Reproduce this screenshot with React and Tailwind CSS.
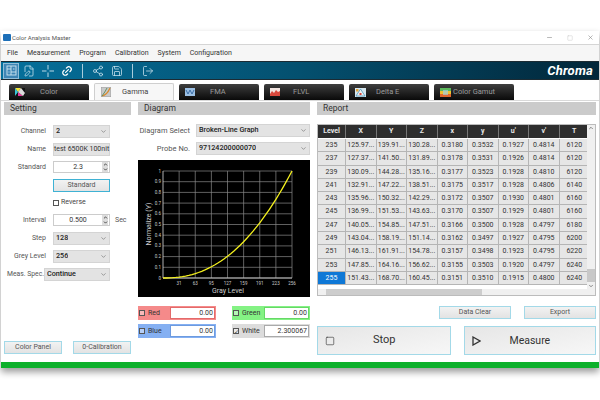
import React from 'react';
import { ChevronDown, ChevronUp, FilePen, Link2, LogOut, Minus, Save, Share2, Square, X } from 'lucide-react';

const rows = [
  ['235', '125.97...', '139.91...', '130.28...', '0.3180', '0.3532', '0.1927', '0.4814', '6120'],
  ['237', '127.37...', '141.50...', '131.89...', '0.3178', '0.3531', '0.1926', '0.4814', '6120'],
  ['239', '130.09...', '144.28...', '135.16...', '0.3177', '0.3523', '0.1928', '0.4810', '6120'],
  ['241', '132.91...', '147.22...', '138.51...', '0.3175', '0.3517', '0.1928', '0.4806', '6140'],
  ['243', '135.96...', '150.32...', '142.29...', '0.3172', '0.3507', '0.1930', '0.4801', '6160'],
  ['245', '136.99...', '151.53...', '143.63...', '0.3170', '0.3507', '0.1929', '0.4801', '6160'],
  ['247', '140.05...', '154.85...', '147.51...', '0.3166', '0.3500', '0.1928', '0.4797', '6180'],
  ['249', '143.04...', '158.19...', '151.14...', '0.3162', '0.3497', '0.1927', '0.4795', '6200'],
  ['251', '146.13...', '161.91...', '154.78...', '0.3157', '0.3498', '0.1923', '0.4795', '6220'],
  ['253', '147.85...', '164.16...', '156.62...', '0.3155', '0.3503', '0.1920', '0.4797', '6240'],
  ['255', '151.43...', '168.70...', '160.45...', '0.3151', '0.3510', '0.1915', '0.4800', '6240'],
];

const Select = ({ value, className }) => (
  <div className={`h-[13px] bg-[#e3e3e3] border border-[#d4d4d4] flex items-center justify-between pl-[2px] pr-[2px] text-[7.2px] font-medium text-[#222] ${className}`}>
    <span className="whitespace-nowrap overflow-hidden">{value}</span>
    <ChevronDown size={7} className="text-[#666] shrink-0" />
  </div>
);

const Spin = ({ value }) => (
  <div className="w-[57px] h-[12px] bg-white border border-[#ccc] flex items-center text-[7px] text-[#333]">
    <span className="flex-1 text-center">{value}</span>
    <div className="w-[6px] h-[10px] bg-[#ddd] mr-[1px] flex flex-col items-center justify-center">
      <ChevronUp size={5} strokeWidth={4} className="text-[#333]" />
      <ChevronDown size={5} strokeWidth={4} className="text-[#333]" />
    </div>
  </div>
);

const FormRow = ({ label, children }) => (
  <div className="h-[18px] flex items-center">
    <span className="w-[42px] text-right text-[7px] text-[#555] whitespace-nowrap">{label}</span>
    <div className="ml-[7px] flex items-center">{children}</div>
  </div>
);

const Header = ({ title }) => (
  <div className="h-[13px] bg-[#cbcbcb] pl-[6px] flex items-center text-[8.5px] text-[#333]">{title}</div>
);

const FlatBtn = ({ children, className = 'border-[#a3d9e8]', width }) => (
  <button className={`h-[13px] border bg-gradient-to-b from-[#f2f2f2] to-[#e3e3e3] text-[7px] text-[#555] flex items-center justify-center ${width} ${className}`}>{children}</button>
);

const TabIcon = ({ kind }) => {
  if (kind === 'color') {
    return (
      <svg width="10" height="8" viewBox="0 0 10 8">
        <rect width="10" height="8" fill="#111" />
        <path d="M0 0 L6 0 L3 4 Z" fill="#f3e43a" />
        <path d="M0 0 L3 4 L0 8 Z" fill="#39c7d8" />
        <path d="M3 4 L8 8 L3 8 Z" fill="#e5399a" />
        <path d="M3 4 L6 0 L10 5 L8 8 Z" fill="#dcdcdc" />
      </svg>
    );
  }
  if (kind === 'gamma') {
    return (
      <svg width="10" height="10" viewBox="0 0 10 10">
        <rect width="10" height="10" fill="#c9c9c9" stroke="#888" strokeWidth="0.6" />
        <path d="M1 9 Q6 8 9 1" fill="none" stroke="#d98a2b" strokeWidth="1.2" />
        <path d="M1 9 Q4 5 6 1" fill="none" stroke="#5a8a5a" strokeWidth="0.9" />
      </svg>
    );
  }
  if (kind === 'fma') {
    return (
      <svg width="10" height="8" viewBox="0 0 10 8">
        <rect width="10" height="8" fill="#9cc0e4" />
        <path d="M1 2 L3 6 L5 2 L7 6 L9 2" fill="none" stroke="#3b6ea8" strokeWidth="1" />
      </svg>
    );
  }
  if (kind === 'flvl') {
    return (
      <svg width="10" height="8" viewBox="0 0 10 8">
        <rect width="10" height="8" fill="#f2e4e0" />
        <path d="M0 6 L2 3 L4 5 L6 2 L8 4 L10 3 L10 8 L0 8 Z" fill="#d8483c" />
      </svg>
    );
  }
  if (kind === 'delta') {
    return (
      <svg width="11" height="9" viewBox="0 0 11 9">
        <rect width="11" height="9" fill="#d6e6ee" />
        <path d="M5.5 1 L10 8 L1 8 Z" fill="#f0f0f0" stroke="#4a9ac0" strokeWidth="0.8" />
        <rect x="1" y="1" width="2.5" height="2.5" fill="#e0a33c" />
        <rect x="4.5" y="5" width="2" height="2" fill="#d8483c" />
      </svg>
    );
  }
  return (
    <svg width="11" height="9" viewBox="0 0 11 9">
      <rect width="11" height="3" fill="#5cb85c" />
      <rect y="3" width="11" height="3" fill="#f0c030" />
      <rect y="6" width="11" height="3" fill="#e0662c" />
      <rect x="3" y="2" width="5" height="5" fill="#9ed0e0" opacity="0.7" />
    </svg>
  );
};

const Tab = ({ kind, label, active, labelClass }) => (
  <div className={`w-[80px] flex items-center pl-[6px] text-[7.5px] ${active ? 'h-[17px] bg-[#f7f7f7] border border-b-0 border-[#cfcfcf] rounded-t-[2px] text-[#444]' : 'h-[16px] bg-gradient-to-b from-[#3f3f3f] to-[#0a0a0a] rounded-t-[2px] text-[#9a9a9a]'}`}>
    <TabIcon kind={kind} />
    <span className={labelClass}>{label}</span>
  </div>
);

const Channel = ({ label, value, bg, checked, boxBorder }) => (
  <div className={`w-[78px] h-[14px] flex items-center ${bg}`}>
    <span className="w-[6px] h-[6px] ml-[1px] border border-[#555] bg-white/40 text-[6px] leading-[5px] text-[#444] flex items-center justify-center shrink-0">{checked ? '✓' : ''}</span>
    <span className="ml-[3px] w-[22px] text-[7px] text-[#333]">{label}</span>
    <span className={`w-[45px] h-[12px] bg-white border ${boxBorder} text-right pr-[1px] text-[7px] leading-[10px] text-[#333]`}>{value}</span>
  </div>
);

const Chart = () => {
  const xs = Array.from({ length: 41 }, (_, i) => i / 40);
  const points = xs.map((t) => `${25 + t * 129},${118 - Math.pow(t, 2.3) * 107}`).join(' ');
  const xTicks = ['31', '63', '95', '127', '159', '191', '223', '256'];
  const yTicks = ['0', '0.1', '0.2', '0.3', '0.4', '0.5', '0.6', '0.7', '0.8', '0.9', '1'];
  return (
    <svg width="172" height="137" viewBox="0 0 172 137" className="block bg-black" fontFamily="Roboto, sans-serif">
      {xTicks.map((_, i) => {
        const x = 25 + ((i + 1) * 129) / 8;
        return <line key={i} x1={x} y1="11" x2={x} y2="118" stroke="#8a8a8a" strokeWidth="0.7" />;
      })}
      {yTicks.map((_, i) => {
        const y = 118 - (i * 107) / 10;
        return <line key={i} x1="25" y1={y} x2="154" y2={y} stroke="#8a8a8a" strokeWidth="0.7" />;
      })}
      <line x1="25" y1="11" x2="25" y2="118" stroke="#ddd" strokeWidth="0.8" />
      <line x1="25" y1="118" x2="154" y2="118" stroke="#ddd" strokeWidth="0.8" />
      {xTicks.map((t, i) => (
        <text key={t} x={25 + ((i + 1) * 129) / 8} y="125" fontSize="4.5" fill="#ccc" textAnchor="middle">{t}</text>
      ))}
      {yTicks.map((t, i) => (
        <text key={t} x="23" y={119.5 - (i * 107) / 10} fontSize="4.5" fill="#ccc" textAnchor="end">{t}</text>
      ))}
      <polyline points={points} fill="none" stroke="#f4f01e" strokeWidth="1.3" />
      <text x="90" y="133" fontSize="7" fill="#ccc" textAnchor="middle">Gray Level</text>
      <text x="13" y="64" fontSize="7" fill="#ccc" textAnchor="middle" transform="rotate(-90 13 64)">Normalize (Y)</text>
    </svg>
  );
};

export default function App() {
  return (
    <div className="w-[600px] h-[400px] bg-white overflow-hidden pt-[31px] font-['Roboto',sans-serif]">
      <div className="mx-[1px] h-[337px] bg-white flex flex-col shadow-[0_4px_7px_rgba(0,0,0,0.4)]">
        {/* title bar */}
        <div className="h-[14px] shrink-0 flex items-center border-b border-[#d5d5d5] pl-[2px] text-[6px] text-[#555]">
          <span className="w-[8px] h-[7px] bg-[#1d6fb8] rounded-[1px] mr-[1px]" />
          <span>Color Analysis Master</span>
          <div className="ml-auto flex items-center gap-[14px] pr-[5px] text-[#888]">
            <Minus size={7} />
            <Square size={6} className="text-[#ccc]" />
            <X size={7} />
          </div>
        </div>
        {/* menu */}
        <div className="h-[16px] shrink-0 bg-[#f6f6f6] flex items-center gap-[9px] pl-[6px] text-[7px] text-[#333]">
          <span>File</span>
          <span>Measurement</span>
          <span>Program</span>
          <span>Calibration</span>
          <span>System</span>
          <span>Configuration</span>
        </div>
        {/* toolbar */}
        <div className="h-[19px] shrink-0 border-y border-[#1c2b33] bg-gradient-to-r from-[#05709c] via-[#04506f] to-[#02273a] flex items-center pl-[2px] pr-[6px] text-[#cfe6f0]">
          <div className="w-[16px] h-[16px] bg-[#3f86b5] border border-[#8fbdd8] flex items-center justify-center">
            <svg width="11" height="11" viewBox="0 0 11 11" fill="none" stroke="currentColor" strokeWidth="0.9">
              <rect x="1" y="1" width="9" height="9" />
              <path d="M1 4 H5 M5 1 V10 M5 7 H10 M2.5 7 H3.5 M7 4 H8.5" />
            </svg>
          </div>
          <div className="ml-[4px] flex items-center gap-[7px]">
            <FilePen size={12} strokeWidth={1.5} />
            <svg width="12" height="12" viewBox="0 0 12 12" fill="none" stroke="currentColor" strokeWidth="0.9">
              <path d="M6 0 V4.5 M6 7.5 V12 M0 6 H4.5 M7.5 6 H12" />
            </svg>
            <Link2 size={12} strokeWidth={2.4} className="text-white -rotate-45" />
          </div>
          <div className="w-px h-[14px] bg-[#a9ccdb] ml-[9px]" />
          <div className="ml-[9px] flex items-center gap-[7px]">
            <Share2 size={12} strokeWidth={1.5} />
            <Save size={12} strokeWidth={1.5} />
          </div>
          <div className="w-px h-[14px] bg-[#a9ccdb] ml-[9px]" />
          <LogOut size={12} strokeWidth={1.5} className="ml-[9px]" />
          <span className="ml-auto text-[13px] font-bold italic text-white tracking-[0.2px]">Chroma</span>
        </div>
        {/* tabs */}
        <div className="h-[21px] shrink-0 flex items-end gap-[5px] pl-[8px] border-b border-[#d9d9d9]">
          <Tab kind="color" label="Color" labelClass="ml-[15px]" />
          <Tab kind="gamma" label="Gamma" labelClass="ml-[11px]" active />
          <Tab kind="fma" label="FMA" labelClass="ml-[15px]" />
          <Tab kind="flvl" label="FLVL" labelClass="ml-[13px]" />
          <Tab kind="delta" label="Delta E" labelClass="ml-[10px]" />
          <Tab kind="gamut" label="Color Gamut" labelClass="ml-[2px]" />
        </div>
        {/* body */}
        <div className="flex-1 flex pt-[1px] pl-[3px] pr-[3px] gap-[7px]">
          {/* setting */}
          <div className="w-[127px] shrink-0 flex flex-col">
            <Header title="Setting" />
            <div className="mt-[7px]">
              <FormRow label="Channel"><Select value="2" className="w-[57px]" /></FormRow>
              <FormRow label="Name">
                <div className="w-[57px] h-[13px] bg-[#e3e3e3] border border-[#d4d4d4] text-[7px] leading-[11px] text-[#333] text-center whitespace-nowrap">test 6500K 100nit</div>
              </FormRow>
              <FormRow label="Standard"><Spin value="2.3" /></FormRow>
              <div className="h-[18px] flex items-center pl-[49px]">
                <FlatBtn width="w-[57px]" className="border-[#3fb2d4]">Standard</FlatBtn>
              </div>
              <div className="h-[17px] flex items-center pl-[49px] text-[7px] text-[#444]">
                <span className="w-[6px] h-[6px] border border-[#555] mr-[2px]" />
                Reverse
              </div>
              <FormRow label="Interval">
                <Spin value="0.500" />
                <span className="ml-[5px] text-[7px] text-[#555]">Sec</span>
              </FormRow>
              <FormRow label="Step"><Select value="128" className="w-[57px]" /></FormRow>
              <FormRow label="Grey Level"><Select value="256" className="w-[57px]" /></FormRow>
              <div className="h-[18px] flex items-center pl-[3px]">
                <span className="text-[6.8px] text-[#555] whitespace-nowrap w-[37px]">Meas. Spec.</span>
                <Select value="Continue" className="w-[66px]" />
              </div>
            </div>
            <div className="mt-auto mb-[8px] flex gap-[11px]">
              <FlatBtn width="w-[58px]">Color Panel</FlatBtn>
              <FlatBtn width="w-[58px]">0-Calibration</FlatBtn>
            </div>
          </div>
          {/* diagram */}
          <div className="w-[172px] shrink-0 flex flex-col">
            <Header title="Diagram" />
            <div className="mt-[9px] flex flex-col gap-[5px]">
              <div className="flex items-center justify-end">
                <span className="text-[7.5px] text-[#555] mr-[6px] whitespace-nowrap">Diagram Select</span>
                <Select value="Broken-Line Graph" className="w-[114px]" />
              </div>
              <div className="flex items-center justify-end">
                <span className="text-[7.5px] text-[#555] mr-[6px] whitespace-nowrap">Probe No.</span>
                <Select value="97124200000070" className="w-[114px]" />
              </div>
            </div>
            <div className="mt-[5px]"><Chart /></div>
            <div className="mt-[9px] grid grid-cols-[78px_78px] justify-between gap-y-[4px]">
              <Channel label="Red" value="0.00" bg="bg-[#f58a8a]" boxBorder="border-[#e36a6a]" />
              <Channel label="Green" value="0.00" bg="bg-[#84f284]" boxBorder="border-[#66d866]" />
              <Channel label="Blue" value="0.00" bg="bg-[#85b0f2]" boxBorder="border-[#6d9be0]" />
              <Channel label="White" value="2.300067" bg="bg-[#dcdcdc]" boxBorder="border-[#aaa]" checked />
            </div>
          </div>
          {/* report */}
          <div className="flex-1 flex flex-col min-w-0">
            <Header title="Report" />
            <div className="mt-[9px] h-[172px] border border-[#bcbcbc] flex flex-col bg-white">
              <div className="flex-1 flex min-h-0">
                <div className="flex-1 min-w-0 overflow-hidden">
                  <div className="grid grid-cols-[28px_repeat(8,30.5px)] text-[7px] text-center">
                    {['Level', 'X', 'Y', 'Z', 'x', 'y', "u'", "v'", 'T'].map((h) => (
                      <div key={h} className="h-[13px] mb-[1px] bg-[#2e2e2e] border-r border-[#777] text-[#e8e8e8] font-bold leading-[13px]">{h}</div>
                    ))}
                    {rows.map((r) => r.map((c, i) => (
                      <div key={r[0] + i} className={`h-[13.3px] border-r border-b border-[#b5b5b5] leading-[12.3px] whitespace-nowrap overflow-hidden ${i === 0 && r[0] === '255' ? 'bg-[#0f78d6] text-white' : 'bg-[#e6e6e6] text-[#333]'}`}>{c}</div>
                    )))}
                  </div>
                </div>
                <div className="w-[8px] bg-[#f0f0f0] flex flex-col items-center justify-between">
                  <ChevronUp size={6} strokeWidth={3} className="text-[#666]" />
                  <div className="flex-1 flex flex-col justify-end w-full pb-[1px]">
                    <div className="h-[13px] bg-[#c8c8c8]" />
                  </div>
                  <ChevronDown size={6} strokeWidth={3} className="text-[#666]" />
                </div>
              </div>
              <div className="h-[6px] shrink-0 bg-[#f0f0f0] px-[8px] flex items-center">
                <div className="w-[156px] h-full bg-[#cdcdcd]" />
              </div>
            </div>
            <div className="mt-[10px] flex justify-end gap-[13px]">
              <FlatBtn width="w-[72px]">Data Clear</FlatBtn>
              <FlatBtn width="w-[72px]">Export</FlatBtn>
            </div>
            <div className="mt-[7px] flex gap-[13px]">
              <button className="w-[134px] h-[29px] border border-[#a3d9e8] bg-gradient-to-br from-[#e6e6e6] to-[#f7f7f7] flex items-center pl-[7px] text-[11px] text-[#333]">
                <Square size={10} strokeWidth={1.5} />
                <span className="ml-[38px]">Stop</span>
              </button>
              <button className="w-[133px] h-[29px] border border-[#a3d9e8] bg-gradient-to-br from-[#e6e6e6] to-[#f7f7f7] flex items-center pl-[7px] text-[10.5px] text-[#333]">
                <svg width="9" height="10" viewBox="0 0 9 10"><path d="M1 1 L8 5 L1 9 Z" fill="none" stroke="#333" strokeWidth="1.3" /></svg>
                <span className="ml-[29px]">Measure</span>
              </button>
            </div>
          </div>
        </div>
        <div className="h-[6px] shrink-0 bg-[#0db02b]" />
      </div>
    </div>
  );
}
